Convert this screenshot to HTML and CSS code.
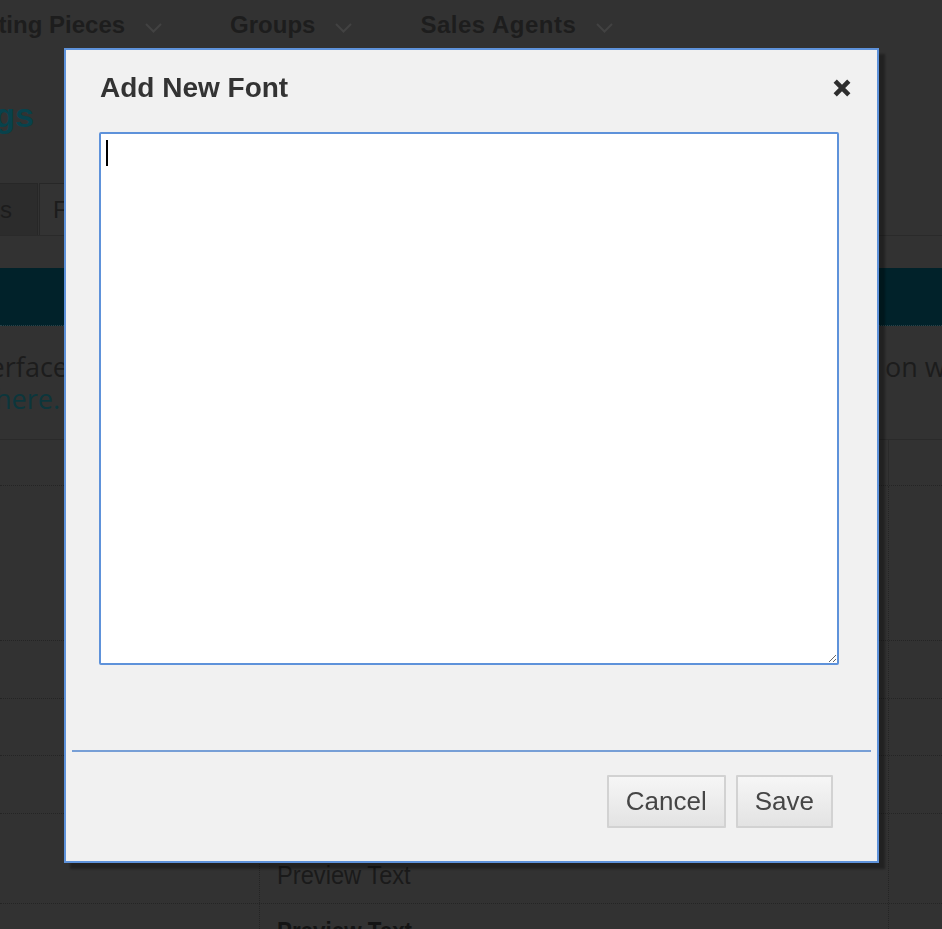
FILE: index.html
```html
<!DOCTYPE html>
<html lang="en">
<head>
<meta charset="utf-8">
<title>Settings – Add New Font</title>
<link rel="stylesheet" href="styles.css">
</head>
<body>
<div class="page">
  <nav class="topnav">
    <div class="nav-item first"><span>Marketing Pieces</span><svg class="chev" width="17" height="10" viewBox="0 0 17 10"><polyline points="1,1 8.5,8.5 16,1"/></svg></div>
    <div class="nav-item"><span>Groups</span><svg class="chev" width="17" height="10" viewBox="0 0 17 10"><polyline points="1,1 8.5,8.5 16,1"/></svg></div>
    <div class="nav-item last"><span>Sales Agents</span><svg class="chev" width="17" height="10" viewBox="0 0 17 10"><polyline points="1,1 8.5,8.5 16,1"/></svg></div>
  </nav>

  <div class="title-row"><div class="clip clip-title"><h1>Settings</h1></div></div>

  <div class="tabs">
    <div class="tab">Users</div>
    <div class="tab active">Fonts</div>
  </div>

  <div class="banner"></div>

  <div class="intro">
    <div class="line"><div class="clip clip-l1"><span>Fonts added here become available in the Sales interface</span></div><div class="right">on which the font is applied.</div></div>
    <div class="line"><div class="clip clip-l2"><span>To learn more about adding fonts, click <a href="#">here.</a></span></div></div>
  </div>

  <div class="grid">
    <div class="trow head h46"><div class="cell c1"></div><div class="cell c2"></div><div class="cell c3"></div></div>
    <div class="trow h155"><div class="cell c1"></div><div class="cell c2"></div><div class="cell c3"></div></div>
    <div class="trow h58"><div class="cell c1"></div><div class="cell c2"></div><div class="cell c3"></div></div>
    <div class="trow h57"><div class="cell c1"></div><div class="cell c2"></div><div class="cell c3"></div></div>
    <div class="trow h58"><div class="cell c1"></div><div class="cell c2"></div><div class="cell c3"></div></div>
    <div class="trow h90"><div class="cell c1"></div><div class="cell c2"><span class="preview">Preview Text</span></div><div class="cell c3"></div></div>
    <div class="trow h60"><div class="cell c1"></div><div class="cell c2"><span class="preview bold">Preview Text</span></div><div class="cell c3"></div></div>
  </div>
</div>

<div class="modal" role="dialog" aria-label="Add New Font">
  <div class="modal-head">
    <h2>Add New Font</h2>
    <button class="close" aria-label="Close"><svg width="18" height="18" viewBox="0 0 18 18"><path d="M2.2 2.2 L15.8 15.8 M15.8 2.2 L2.2 15.8"/></svg></button>
  </div>
  <div class="modal-body">
    <div class="editor">
      <textarea></textarea>
      <span class="caret"></span>
    </div>
  </div>
  <div class="modal-foot">
    <button class="btn">Cancel</button>
    <button class="btn">Save</button>
  </div>
</div>
</body>
</html>
```

FILE: styles.css
```css
html, body {
  margin: 0;
  padding: 0;
}
body {
  background: #323232;
  overflow: hidden;
  width: 942px;
  height: 929px;
  font-family: "Liberation Sans", Arial, sans-serif;
  color: #1c1c1c;
}

/* ---------- background page (dimmed) ---------- */
.topnav {
  display: flex;
  align-items: center;
  height: 50px;
  margin-left: -71px;
  gap: 68px;
  white-space: nowrap;
}
.nav-item {
  display: flex;
  align-items: center;
  gap: 20px;
  font-size: 24px;
  font-weight: bold;
  line-height: 50px;
  color: #1d1d1d;
}
.nav-item.last span {
  letter-spacing: 0.5px;
}
.chev {
  margin-top: 6px;
  fill: none;
  stroke: #424242;
  stroke-width: 2;
}

.clip {
  display: flex;
  justify-content: flex-end;
  overflow: hidden;
  white-space: nowrap;
  flex: none;
}
.title-row {
  margin-top: 45px;
  height: 40px;
}
.clip-title { width: 34px; }
h1 {
  margin: 0;
  font-size: 34px;
  line-height: 40px;
  font-weight: bold;
  color: #08424c;
}

.tabs {
  display: flex;
  margin-top: 48px;
  height: 52px;
  border-bottom: 1px solid #2a2a2a;
}
.tab {
  box-sizing: border-box;
  height: 52px;
  line-height: 51px;
  font-size: 24px;
  border: 1px solid #272727;
  border-bottom: none;
  white-space: nowrap;
}
.tab:first-child {
  width: 98px;
  margin-left: -60px;
  background: #2c2c2c;
  text-align: right;
  padding-right: 25px;
}
.tab.active {
  margin-left: 1px;
  padding: 0 16px 0 13px;
  background: #333;
}

.banner {
  margin-top: 32px;
  height: 57px;
  background: #01222a;
  border-bottom: 1px dotted #274248;
}

.intro {
  margin-top: 25px;
  font-family: "Open Sans", "Liberation Sans", sans-serif;
  font-size: 27px;
  line-height: 32px;
  color: #1c1c1c;
}
.line {
  display: flex;
  height: 32px;
}
.clip-l1 { width: 68px; }
.clip-l2 { width: 60px; }
.intro a {
  color: #0c363c;
  text-decoration: none;
}
.right {
  margin-left: auto;
  width: 57px;
  overflow: hidden;
  white-space: nowrap;
}

.grid {
  margin-top: 24px;
  border-top: 1px solid #2a2a2a;
}
.trow {
  display: grid;
  grid-template-columns: 260px 629px 1fr;
  box-sizing: border-box;
  border-bottom: 1px dotted #242424;
}
.h46 { height: 46px; }
.h155 { height: 155px; }
.h58 { height: 58px; }
.h57 { height: 57px; }
.h90 { height: 90px; }
.h60 { height: 60px; }
.cell.c1, .cell.c2 {
  border-right: 1px dotted #242424;
}
.head .cell.c2 { border-right: 1px solid #2a2a2a; }
.head .cell.c1 { border-right: none; }
.c2 {
  padding-left: 17px;
}
.preview {
  display: inline-block;
  margin-top: 46px;
  font-family: "Liberation Sans", sans-serif;
  font-size: 26px;
  line-height: 30px;
  color: #1a1a1a;
  transform: scaleX(0.91);
  transform-origin: left center;
}
.preview.bold {
  margin-top: 12px;
  font-weight: bold;
  font-size: 26px;
  color: #141414;
  transform: scaleX(0.86);
}

/* ---------- modal ---------- */
.modal {
  position: fixed;
  left: 64px;
  top: 48px;
  width: 815px;
  height: 815px;
  box-sizing: border-box;
  background: #f1f1f1;
  border: 2px solid #5e92da;
  box-shadow: 6px 6px 2px rgba(0, 0, 0, 0.32);
  display: flex;
  flex-direction: column;
}
.modal-head {
  display: flex;
  align-items: center;
  justify-content: space-between;
  padding: 22px 26px 0 34px;
  height: 32px;
}
.modal-head h2 {
  margin: 0;
  font-size: 28px;
  line-height: 32px;
  font-weight: bold;
  color: #333;
}
.close {
  width: 18px;
  height: 18px;
  padding: 0;
  border: 0;
  background: none;
  display: flex;
}
.close svg path {
  stroke: #2e2e2e;
  stroke-width: 4.6;
  fill: none;
}
.modal-body {
  padding: 28px 0 0 33px;
  height: 618px;
}
.editor {
  position: relative;
  width: 740px;
  height: 533px;
}
.editor textarea {
  display: block;
  box-sizing: border-box;
  width: 740px;
  height: 533px;
  margin: 0;
  background: #fff;
  border: 2px solid #5e92da;
  border-radius: 2px;
  outline: none;
  caret-color: transparent;
  font-family: "Liberation Mono", monospace;
  font-size: 20px;
}
.caret {
  position: absolute;
  left: 7px;
  top: 8px;
  width: 2px;
  height: 26px;
  background: #000;
}
.modal-foot {
  margin: 0 6px;
  border-top: 2px solid #779fd6;
  display: flex;
  justify-content: flex-end;
  gap: 10px;
  padding: 23px 38px 0 0;
}
.btn {
  box-sizing: border-box;
  height: 53px;
  padding: 0 17px;
  font-family: "Liberation Sans", Arial, sans-serif;
  font-size: 26px;
  color: #454545;
  background: linear-gradient(#f6f6f6, #e3e3e3);
  border: 2px solid #d2d2d2;
  border-radius: 1px;
}
```
